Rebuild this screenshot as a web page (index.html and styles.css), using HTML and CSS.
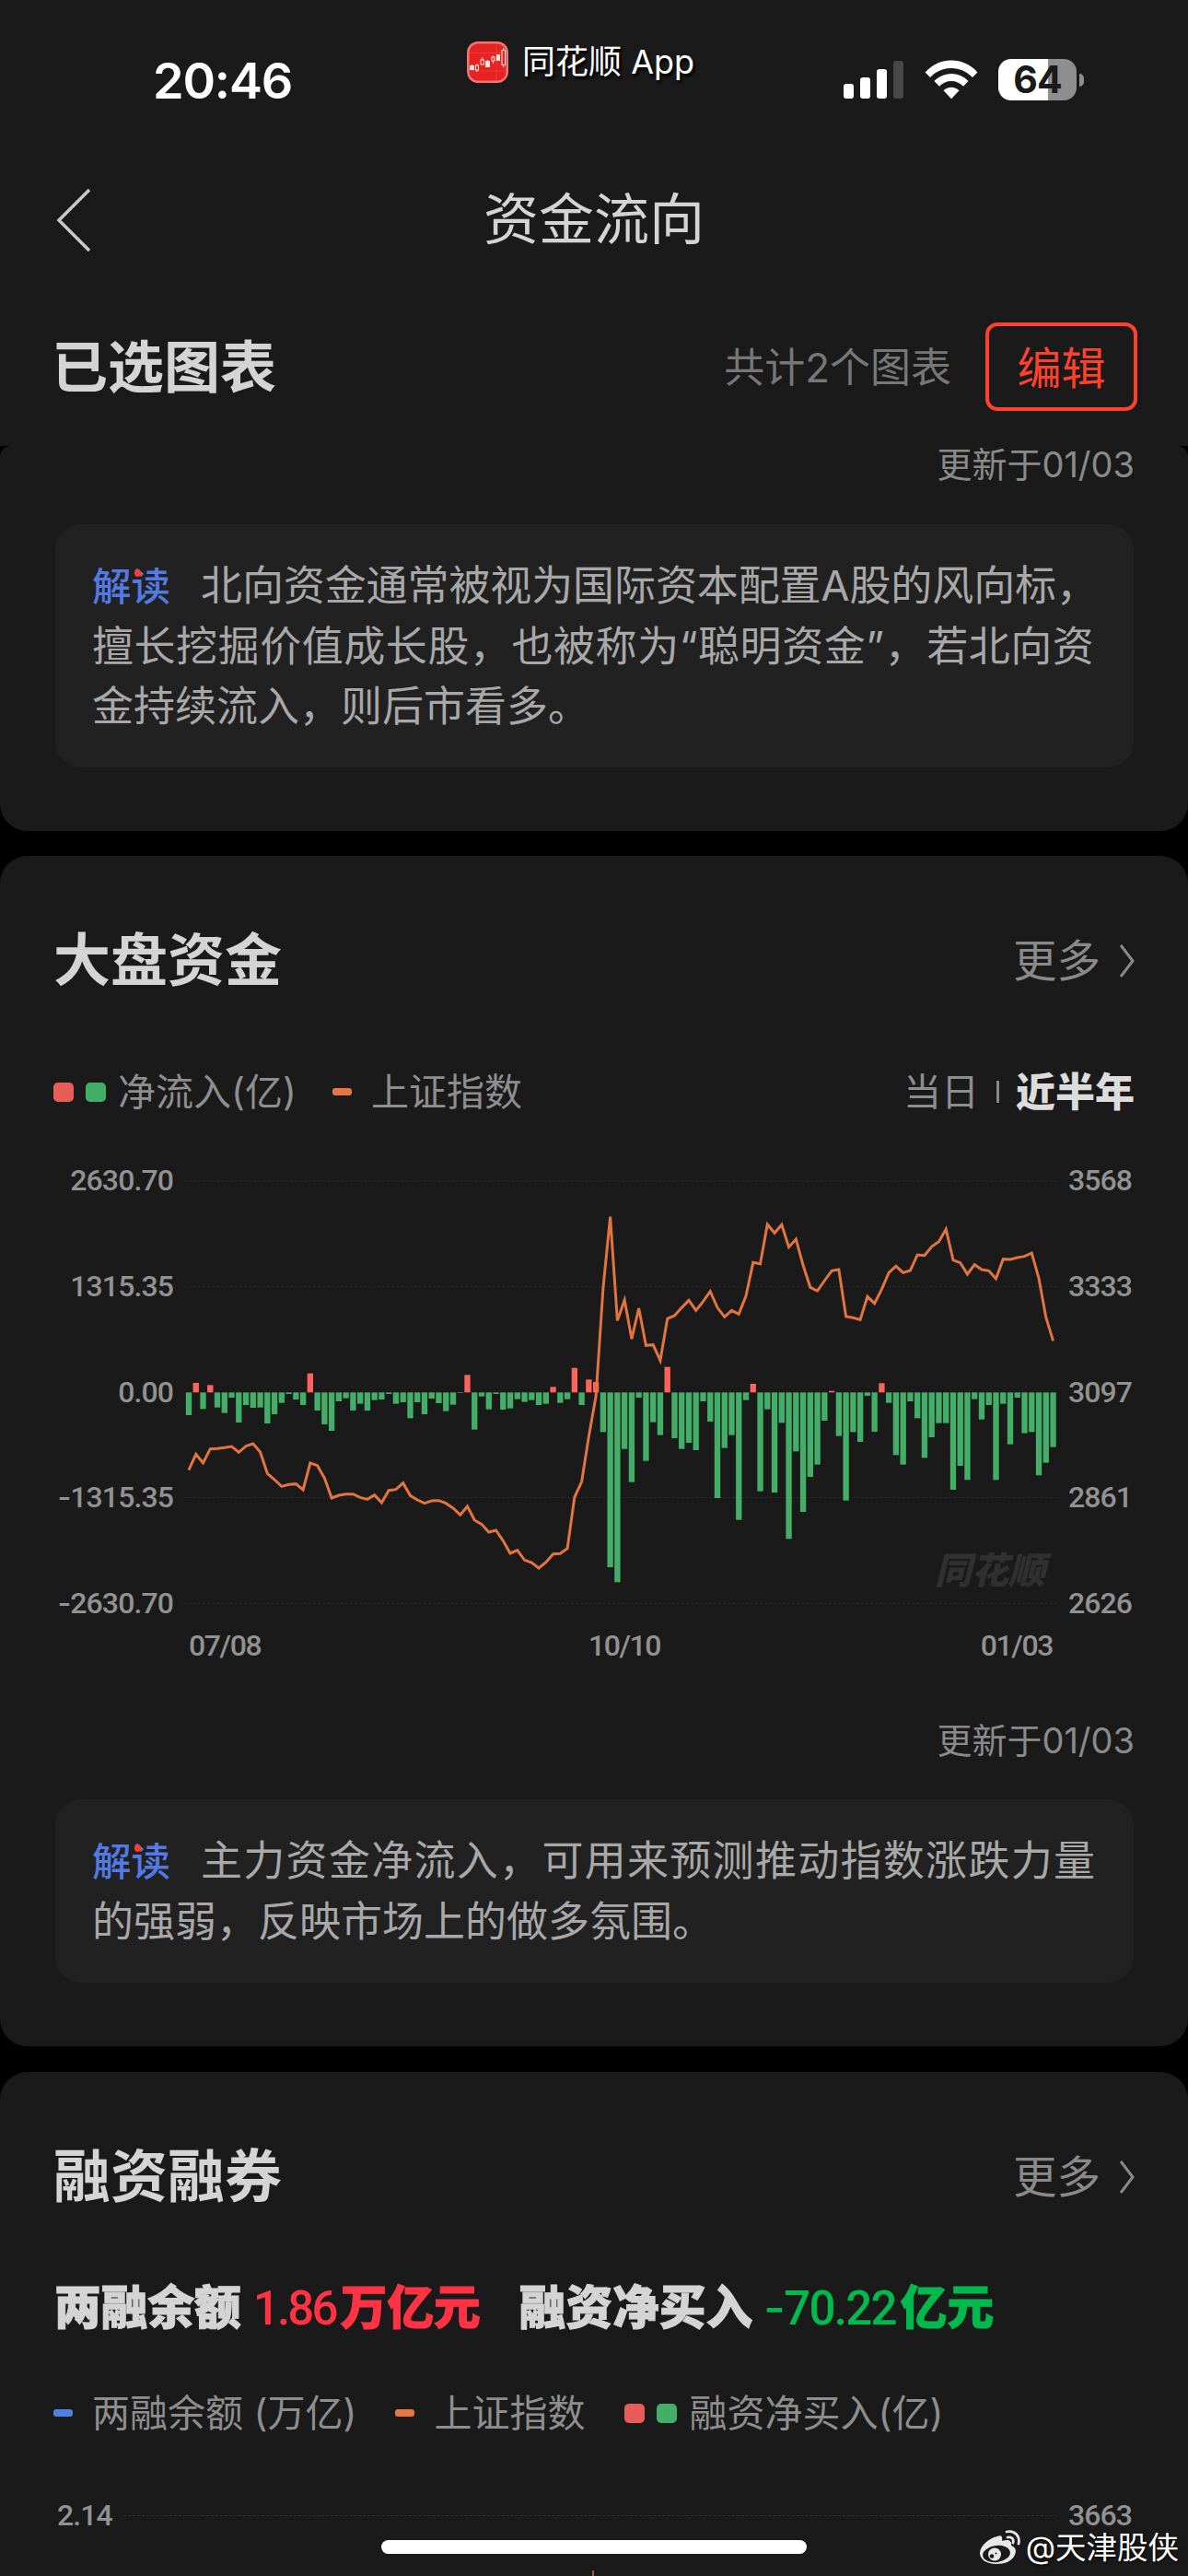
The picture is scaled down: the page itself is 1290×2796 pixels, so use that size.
FILE: index.html
```html
<!DOCTYPE html>
<html lang="zh-CN">
<head>
    <meta charset="UTF-8">
    <meta name="viewport" content="width=device-width, initial-scale=1.0">
    <title>资金流向</title>
    <link rel="stylesheet" href="styles.css">
</head>
<body>
    <header class="top">
        <div class="status-bar">
            <div class="clock">20:46</div>
            <div class="app-tag">
                <svg class="app-icon" viewBox="0 0 45 45">
                    <rect width="45" height="45" rx="12" fill="#f27474"/>
                    <rect x="2.5" y="2.5" width="40" height="40" rx="9.5" fill="#e62222"/>
                    <path d="M3 12.5H42M3 32H42M32 3V42" stroke="#ee4444" stroke-width="0.7"/>
                    <g fill="#ffe9e4">
                        <rect x="3" y="26" width="5" height="5"/><rect x="5" y="25" width="1" height="2"/>
                        <rect x="20" y="21" width="5" height="7"/><rect x="22" y="20" width="1" height="2"/>
                        <rect x="32" y="14" width="4" height="7"/>
                    </g>
                    <g fill="none" stroke="#ffe9e4" stroke-width="1">
                        <rect x="9.5" y="26" width="3" height="5"/><path d="M11 31v2M11 24.500v1.500"/>
                        <rect x="15" y="20" width="3.500" height="5"/><path d="M16.700 17v3"/>
                        <rect x="27" y="17" width="3" height="4"/><path d="M28.500 15.500v1.500M28.500 21v3"/>
                        <rect x="38" y="9.500" width="3.500" height="16"/><path d="M39.700 7v2.500M39.700 25.500v2.500"/>
                    </g>
                </svg>
                <span>同花顺 App</span>
            </div>
            <div class="status-icons">
                <svg class="signal" viewBox="0 0 65 45">
                    <rect x="0" y="27" width="11" height="16" rx="3" fill="#fff"/>
                    <rect x="18" y="20" width="11" height="23" rx="3" fill="#fff"/>
                    <rect x="36" y="11" width="11" height="32" rx="3" fill="#fff"/>
                    <rect x="54" y="2" width="11" height="41" rx="3" fill="#484848"/>
                </svg>
                <svg class="wifi" viewBox="0 0 58 45">
                    <path d="M0.600 14.400C16-2.800 42-2.800 57.400 14.400L52 20C39.500 6.500 18.500 6.500 6 20Z" fill="#fff"/>
                    <path d="M10.500 24C20.500 13.200 37.500 13.200 47.500 24L42 29.800C35 22 23 22 16 29.800Z" fill="#fff"/>
                    <path d="M20.500 34.300C25 29.500 33 29.500 37.500 34.300L29 43.200Z" fill="#fff"/>
                </svg>
                <div class="battery"><span>64</span></div>
            </div>
        </div>
        <div class="nav-bar">
            <svg class="back" viewBox="0 0 40 72">
                <path d="M37 3L4 36L37 69" fill="none" stroke="#c8c8c8" stroke-width="3.500"/>
            </svg>
            <h1>资金流向</h1>
        </div>
        <div class="selected-bar">
            <h2>已选图表</h2>
            <span class="total">共计2个图表</span>
            <button class="edit">编辑</button>
        </div>
    </header>

    <section class="card first">
        <div class="updated">更新于01/03</div>
        <p class="note"><b>解读</b><span class="tight">北向资金通常被视为国际资本配置A股的风向标，</span><br><span class="quoted">擅长挖掘价值成长股，也被称为“聪明资金”，若北向资</span><br>金持续流入，则后市看多。</p>
    </section>

    <section class="card market">
        <div class="card-head">
            <h2>大盘资金</h2>
            <a class="more">更多
                <svg viewBox="0 0 18 38"><path d="M2 2L15 19L2 36" fill="none" stroke="#888" stroke-width="3"/></svg>
            </a>
        </div>
        <div class="legend">
            <i class="sq red"></i><i class="sq green"></i><span>净流入(亿)</span>
            <i class="dash orange"></i><span>上证指数</span>
            <div class="range"><span>当日</span><i></i><strong>近半年</strong></div>
        </div>
        <div class="chart">
            <div class="axis left">
                <span>2630.70</span><span>1315.35</span><span>0.00</span><span><u>-</u>1315.35</span><span><u>-</u>2630.70</span>
            </div>
            <div class="plot">
                <svg id="flow-chart" viewBox="0 66 2844 1494"></svg>
                <span class="brand">同花顺</span>
            </div>
            <div class="axis right">
                <span>3568</span><span>3333</span><span>3097</span><span>2861</span><span>2626</span>
            </div>
        </div>
        <div class="dates"><span>07/08</span><span>10/10</span><span>01/03</span></div>
        <div class="updated">更新于01/03</div>
        <p class="note"><b>解读</b><span class="wide">主力资金净流入，可用来预测推动指数涨跌力量</span><br>的强弱，反映市场上的做多氛围。</p>
    </section>

    <section class="card margin">
        <div class="card-head">
            <h2>融资融券</h2>
            <a class="more">更多
                <svg viewBox="0 0 18 38"><path d="M2 2L15 19L2 36" fill="none" stroke="#888" stroke-width="3"/></svg>
            </a>
        </div>
        <div class="summary">
            <span>两融余额</span><span class="up"><em>1.86</em>万亿元</span>
            <span class="second">融资净买入</span><span class="down"><em><u>-</u>70.22</em>亿元</span>
        </div>
        <div class="legend">
            <i class="dash blue"></i><span>两融余额 (万亿)</span>
            <i class="dash orange"></i><span>上证指数</span>
            <i class="sq red next"></i><i class="sq green"></i><span>融资净买入(亿)</span>
        </div>
        <div class="axis-row"><span>2.14</span><i></i><span>3663</span></div>
    </section>

    <div class="line-tip"></div>
    <div class="home-bar"></div>
    <div class="weibo">
        <svg viewBox="0 0 44 38">
            <path d="M19 7C23 5 25 7 24 12C30 10 35 11 34 17C39 19 40 22 38 27C35 34 27 37 18 37C7 37 0 32 0 25C0 18 9 9 19 7Z" fill="#e8e8e8"/>
            <ellipse cx="18" cy="26" rx="15" ry="9" fill="#1a1a1a" transform="rotate(-8 18 26)"/>
            <circle cx="16" cy="26.500" r="7" fill="#e8e8e8"/>
            <circle cx="13" cy="28.500" r="2.300" fill="#1a1a1a"/>
            <circle cx="17.500" cy="25.500" r="1" fill="#1a1a1a"/>
            <path d="M29 2C38 0 44 7 42 15M30 8C35 7 37 10 36 14" fill="none" stroke="#e8e8e8" stroke-width="2.800" stroke-linecap="round"/>
        </svg>
        <span>@天津股侠</span>
    </div>
    <script src="chart.js"></script>
</body>
</html>
```

FILE: styles.css
```css
* {
    box-sizing: border-box;
}
body {
    margin: 0;
    width: 1290px;
    height: 2796px;
    position: relative;
    overflow: hidden;
    background: #000;
    color: #d4d4d4;
    font-family: Inter, "Noto Sans CJK SC", sans-serif;
}
h1, h2, p {
    margin: 0;
}
i, em {
    font-style: normal;
}
svg {
    display: block;
}

/* header */
.top {
    height: 484px;
    background: #1a1a1a;
}
.status-bar {
    display: grid;
    grid-template-columns: 507px 409px 1fr;
    height: 174px;
    color: #fff;
}
.clock {
    padding: 55px 0 0 166px;
    font-size: 54px;
    line-height: 66px;
    font-weight: 600;
    letter-spacing: -1.200px;
}
.app-tag {
    display: flex;
    align-items: center;
    gap: 15px;
    height: 45px;
    margin-top: 45px;
    font-size: 36px;
    line-height: 40px;
    text-shadow: 2px 3px 3px #000;
    white-space: nowrap;
}
.app-tag span {
    padding-bottom: 1px;
}
.app-icon {
    width: 45px;
    height: 45px;
}
.status-icons {
    display: flex;
    height: 45px;
    margin-top: 64px;
}
.signal {
    width: 65px;
}
.wifi {
    width: 58px;
    margin: 0 22px 0 23px;
}
.battery {
    position: relative;
    width: 85px;
    height: 45px;
    border-radius: 14px;
    background: linear-gradient(90deg, #fff 54px, #8e8e8e 54px);
    color: #1a1a1a;
    font-size: 41px;
    font-weight: 700;
    line-height: 45px;
    letter-spacing: -1px;
    text-align: center;
}
.battery::after {
    content: "";
    position: absolute;
    right: -8px;
    top: 16px;
    width: 5px;
    height: 14px;
    border-radius: 0 5px 5px 0;
    background: #8e8e8e;
}
.nav-bar {
    display: grid;
    grid-template-columns: 1fr auto 1fr;
    align-items: center;
    height: 130px;
    padding: 0 60px;
}
.back {
    width: 40px;
    height: 72px;
}
h1 {
    margin-top: -3px;
    font-size: 60px;
    font-weight: 400;
    line-height: 80px;
}
h2 {
    margin-left: -2px;
    font-size: 60px;
    font-weight: 700;
    line-height: 80px;
}
.selected-bar {
    display: flex;
    align-items: center;
    height: 96px;
    margin-top: 46px;
    padding: 0 55px 0 58px;
}
.selected-bar h2 {
    margin-top: 2px;
    font-size: 61px;
}
.total {
    margin: -4px 0 0 auto;
    font-size: 44px;
    color: #777;
}
.edit {
    width: 165px;
    height: 96px;
    margin-left: 37px;
    padding: 0 0 5px;
    border: 4px solid #ff412c;
    border-radius: 13px;
    background: none;
    color: #ff412c;
    font: 48px "Noto Sans CJK SC", sans-serif;
}

/* cards */
.card {
    padding: 0 60px;
    border-radius: 30px;
    background: #1a1a1a;
}
.first {
    height: 418px;
    border-radius: 12px 12px 30px 30px;
}
.market {
    height: 1292px;
    margin-top: 27px;
    padding-top: 74px;
}
.margin {
    height: 600px;
    margin-top: 28px;
    padding-top: 74px;
}
.card-head {
    display: flex;
    align-items: center;
    justify-content: space-between;
    height: 80px;
}
.card-head h2 {
    font-size: 62px;
}
.more {
    display: flex;
    align-items: center;
    gap: 20px;
    margin-right: -3px;
    font-size: 47.500px;
    line-height: 60px;
    color: #8a8a8a;
}
.more svg {
    width: 18px;
    height: 38px;
}
.updated {
    height: 40px;
    line-height: 40px;
    font-size: 38px;
    text-align: right;
    color: #8a8a8a;
    margin-right: -2px;
}
.note {
    width: 1171px;
    margin-top: 45px;
    padding: 34px 40px;
    border-radius: 28px;
    background: #212121;
    color: #a8a8a8;
    font-size: 45px;
    line-height: 65px;
    white-space: nowrap;
}
.note b {
    position: relative;
    display: inline-block;
    margin-right: 33px;
    font-size: 42.500px;
    font-weight: 500;
    color: #5279e4;
}
.note b::after {
    content: "";
    position: absolute;
    left: 46px;
    top: 14px;
    width: 7px;
    height: 8px;
    border-radius: 50%;
    background: #ff3b30;
}
.wide {
    letter-spacing: 1.300px;
}
.tight {
    letter-spacing: -0.100px;
}
.quoted {
    letter-spacing: 0.550px;
}
.legend {
    display: flex;
    align-items: center;
    height: 60px;
    margin: 72px 0 0 -2px;
    font-size: 41px;
    line-height: 60px;
    color: #8e8e8e;
    white-space: nowrap;
}
.sq {
    width: 22px;
    height: 21px;
    margin-right: 13px;
    border-radius: 5px;
}
.dash {
    width: 21px;
    height: 8px;
    margin-right: 21px;
    border-radius: 3px;
}
.legend span + .dash {
    margin-left: 39px;
}
.margin .legend span + .dash {
    margin-left: 42px;
}
.legend .next {
    margin-left: 43px;
}
.red { background: #e65e57; }
.green { background: #43ae68; }
.orange { background: #e8763f; }
.blue { background: #4c82e8; }
.range {
    display: flex;
    align-items: center;
    margin-left: auto;
    margin-right: -2px;
}
.range i {
    width: 3px;
    height: 24px;
    margin: 0 18px 0 19px;
    background: #888;
}
.range strong {
    font-size: 43px;
    font-weight: 900;
    color: #dcdcdc;
}

/* fund flow chart */
.chart {
    display: grid;
    grid-template-columns: 128px 948px 70px;
    gap: 12px;
    height: 498px;
    margin-top: 47px;
}
.axis {
    display: flex;
    flex-direction: column;
    justify-content: space-between;
    margin-top: -1px;
}
.axis, .dates, .axis-row {
    font-family: Roboto, sans-serif;
    font-size: 32px;
    font-weight: 500;
    line-height: 40px;
    letter-spacing: -0.900px;
    color: #929292;
}
.axis u, .summary u {
    font-family: Inter, sans-serif;
    text-decoration: none;
}
.left {
    align-items: flex-end;
}
.plot {
    position: relative;
}
#flow-chart {
    width: 948px;
    height: 498px;
}
.grid {
    stroke: #2b2b2b;
    stroke-width: 3;
    stroke-dasharray: 9 6;
}
.index-line {
    fill: none;
    stroke: #e27440;
    stroke-width: 9;
}
.in { fill: #ff635c; }
.out { fill: #43ae68; }
.brand {
    position: absolute;
    right: 13px;
    top: 418px;
    font-size: 40px;
    line-height: 50px;
    font-weight: 900;
    font-style: italic;
    color: #303030;
}
.dates {
    display: flex;
    justify-content: space-between;
    height: 40px;
    margin-top: 6px;
    padding: 0 87px 0 145px;
    letter-spacing: -1.400px;
}
.dates span:nth-child(2) {
    margin-left: 8px;
}
.market .updated {
    margin-top: 63px;
}
.market .note {
    margin-top: 44px;
}

/* margin trading */
.summary {
    display: flex;
    align-items: center;
    height: 70px;
    margin: 63px 0 0 -1px;
    font-size: 50.700px;
    font-weight: 900;
    white-space: nowrap;
    -webkit-text-stroke: 1px currentColor;
}
.summary em {
    margin-right: 5px;
    font-family: Roboto, sans-serif;
    font-weight: 500;
    font-size: 51px;
    letter-spacing: -2.800px;
    -webkit-text-stroke: 0;
}
.up {
    margin-left: 13px;
    color: #ff3344;
}
.second {
    margin-left: 42px;
}
.down {
    margin-left: 12px;
    color: #00ba4d;
}
.down em {
    letter-spacing: -1.700px;
}
.margin .legend {
    margin-top: 53px;
}
.axis-row {
    display: flex;
    align-items: center;
    gap: 12px;
    height: 40px;
    margin: 61px 0 0 2px;
}
.axis-row i {
    flex: 1;
    border-top: 1px dashed #303030;
}
.axis-row span:last-child {
    width: 70px;
}

/* overlays */
.home-bar {
    position: absolute;
    left: 414px;
    top: 2757px;
    width: 462px;
    height: 15px;
    border-radius: 8px;
    background: #fff;
}
.line-tip {
    position: absolute;
    left: 643px;
    top: 2790px;
    width: 2px;
    height: 6px;
    background: #a05a38;
}
.weibo {
    position: absolute;
    right: 10px;
    bottom: 11px;
    display: flex;
    align-items: center;
    gap: 6px;
    font-size: 33.500px;
    line-height: 40px;
    color: #fff;
    text-shadow: 1px 1px 3px #000;
}
.weibo svg {
    width: 44px;
    height: 38px;
}
```

FILE: chart.js
```js
// bar ends and index line, in chart units (zero line at 814)
const ZERO = 814;
const START = 15;
const STEP = 23.27;

const flows = [
    888, 783, 868, 790, 863, 881, 831, 912, 855, 864, 863, 915, 885, 848, 819, 837, 855, 752, 873, 918,
    939, 843, 833, 873, 851, 873, 839, 837, 819, 851, 846, 898, 846, 885, 834, 849, 875, 854, 816, 757,
    935, 827, 869, 819, 870, 866, 836, 845, 839, 855, 851, 796, 848, 836, 734, 855, 772, 780, 943, 1383,
    1432, 998, 1106, 831, 1037, 911, 953, 731, 963, 998, 978, 1002, 843, 909, 1158, 995, 953, 1229, 839, 786,
    1136, 869, 1140, 913, 1291, 1006, 1203, 1089, 1049, 906, 809, 956, 1166, 943, 975, 825, 942, 784, 848, 1018,
    1049, 843, 898, 1027, 960, 914, 914, 1131, 1053, 1099, 836, 902, 855, 1099, 851, 983, 831, 947, 943, 1084,
    1043, 992
];

const index = [
    1067, 1015, 1044, 998, 997, 994, 990, 1009, 989, 981, 1008, 1078, 1098, 1120, 1114, 1112, 1131, 1044, 1052, 1093,
    1158, 1149, 1145, 1145, 1156, 1162, 1148, 1173, 1133, 1130, 1109, 1150, 1164, 1175, 1167, 1166, 1175, 1191, 1213, 1185,
    1230, 1243, 1269, 1263, 1297, 1338, 1328, 1360, 1368, 1386, 1367, 1340, 1339, 1322, 1155, 1105, 957, 826, 475, 242,
    580, 513, 640, 540, 661, 659, 710, 574, 564, 538, 514, 547, 518, 485, 538, 568, 547, 559, 500, 391,
    395, 267, 295, 268, 341, 315, 400, 472, 483, 450, 418, 414, 567, 571, 577, 502, 524, 478, 424, 403,
    424, 417, 366, 368, 339, 323, 282, 383, 392, 429, 398, 414, 418, 444, 380, 381, 375, 371, 360, 443,
    570, 646
];

let svg = '';
[126, 470, 1157, 1501].forEach(y => {
    svg += `<line class="grid" x1="0" x2="2844" y1="${y}" y2="${y}"/>`;
});
flows.forEach((end, i) => {
    const x = START + i * STEP - 9.5;
    const y = Math.min(end, ZERO);
    svg += `<rect class="${end < ZERO ? 'in' : 'out'}" x="${x}" y="${y}" width="19" height="${Math.abs(end - ZERO)}"/>`;
});
svg += `<polyline class="index-line" points="${index.map((y, i) => (START + i * STEP) + ',' + y).join(' ')}"/>`;
document.getElementById('flow-chart').innerHTML = svg;
```
